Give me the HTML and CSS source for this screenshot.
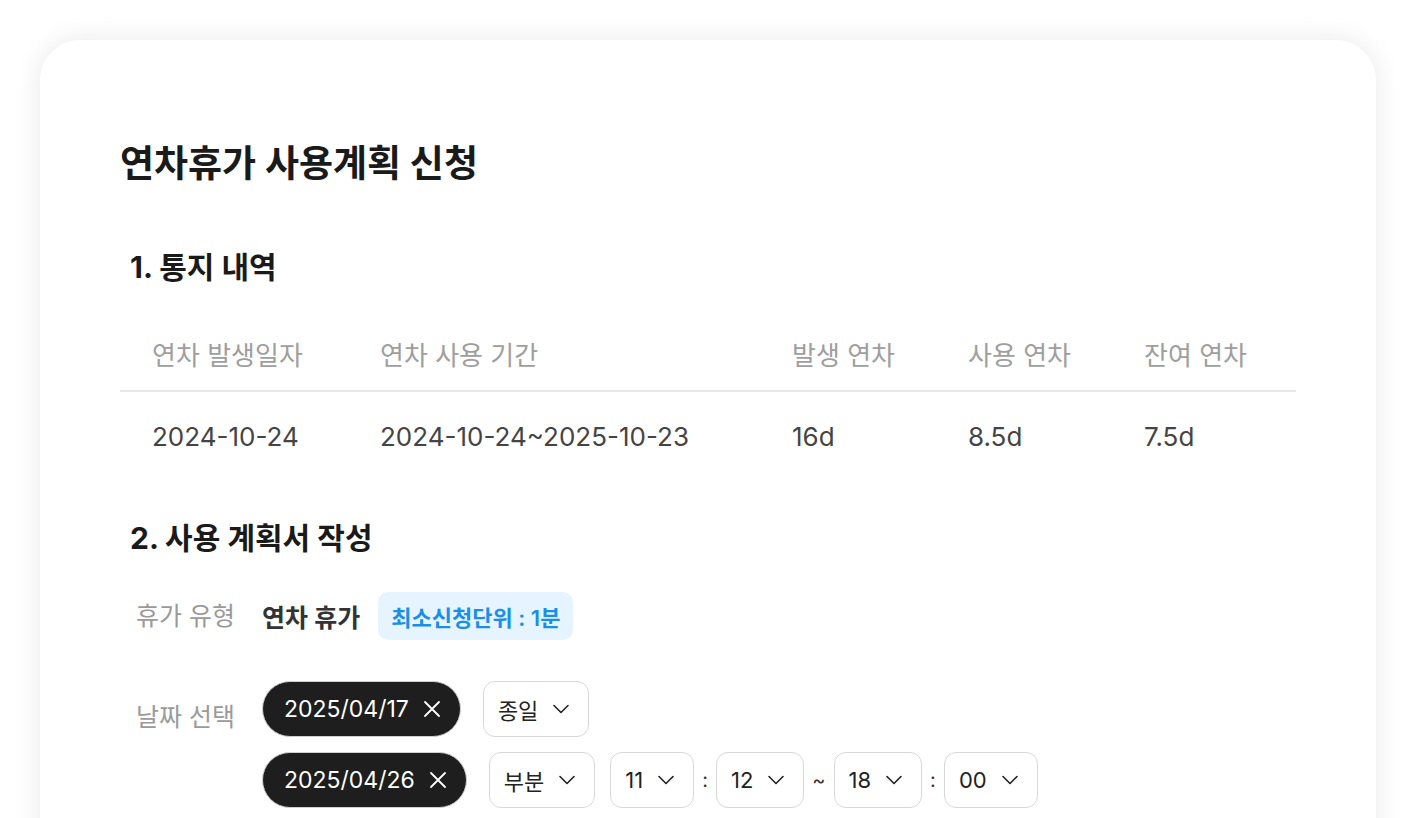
FILE: index.html
```html
<!DOCTYPE html>
<html lang="ko">
<head>
  <meta charset="UTF-8" />
  <meta name="viewport" content="width=device-width, initial-scale=1.0"/>
  <title>연차휴가 사용계획 신청</title>
  <link rel="stylesheet" href="styles.css">
</head>
<body>
  <div class="card">
    <h1 class="title">연차휴가 사용계획 신청</h1>

    <h2 class="section">1. 통지 내역</h2>
    <div class="table">
      <div class="th">연차 발생일자</div>
      <div class="th">연차 사용 기간</div>
      <div class="th">발생 연차</div>
      <div class="th">사용 연차</div>
      <div class="th">잔여 연차</div>
      <div class="td">2024-10-24</div>
      <div class="td">2024-10-24~2025-10-23</div>
      <div class="td">16d</div>
      <div class="td">8.5d</div>
      <div class="td">7.5d</div>
    </div>

    <h2 class="section">2. 사용 계획서 작성</h2>
    <div class="field">
      <span class="label">휴가 유형</span>
      <div class="field-body type-row">
        <span class="value">연차 휴가</span>
        <span class="badge">최소신청단위 : 1분</span>
      </div>
    </div>

    <div class="field dates">
      <span class="label">날짜 선택</span>
      <div class="field-body date-list">
        <div class="date-row">
          <span class="chip">2025/04/17
            <svg width="18" height="18" viewBox="0 0 18 18"><path d="M2 2 L16 16 M16 2 L2 16" stroke="#fff" stroke-width="1.8" stroke-linecap="round"/></svg>
          </span>
          <span class="select">종일
            <svg width="16" height="10" viewBox="0 0 16 10"><path d="M1 1.5 L8 8.5 L15 1.5" fill="none" stroke="#222" stroke-width="1.6" stroke-linecap="round" stroke-linejoin="round"/></svg>
          </span>
        </div>
        <div class="date-row">
          <span class="chip">2025/04/26
            <svg width="18" height="18" viewBox="0 0 18 18"><path d="M2 2 L16 16 M16 2 L2 16" stroke="#fff" stroke-width="1.8" stroke-linecap="round"/></svg>
          </span>
          <span class="select">부분
            <svg width="16" height="10" viewBox="0 0 16 10"><path d="M1 1.5 L8 8.5 L15 1.5" fill="none" stroke="#222" stroke-width="1.6" stroke-linecap="round" stroke-linejoin="round"/></svg>
          </span>
          <div class="time">
            <span class="select">11
              <svg width="16" height="10" viewBox="0 0 16 10"><path d="M1 1.5 L8 8.5 L15 1.5" fill="none" stroke="#222" stroke-width="1.6" stroke-linecap="round" stroke-linejoin="round"/></svg>
            </span>
            <span class="sep">:</span>
            <span class="select">12
              <svg width="16" height="10" viewBox="0 0 16 10"><path d="M1 1.5 L8 8.5 L15 1.5" fill="none" stroke="#222" stroke-width="1.6" stroke-linecap="round" stroke-linejoin="round"/></svg>
            </span>
            <span class="sep">~</span>
            <span class="select">18
              <svg width="16" height="10" viewBox="0 0 16 10"><path d="M1 1.5 L8 8.5 L15 1.5" fill="none" stroke="#222" stroke-width="1.6" stroke-linecap="round" stroke-linejoin="round"/></svg>
            </span>
            <span class="sep">:</span>
            <span class="select">00
              <svg width="16" height="10" viewBox="0 0 16 10"><path d="M1 1.5 L8 8.5 L15 1.5" fill="none" stroke="#222" stroke-width="1.6" stroke-linecap="round" stroke-linejoin="round"/></svg>
            </span>
          </div>
        </div>
      </div>
    </div>
  </div>
</body>
</html>
```

FILE: styles.css
```css
body {
  margin: 0;
  padding: 40px;
  background: #fff;
  font-family: "Inter", "Noto Sans CJK KR", sans-serif;
  color: #1a1a1a;
}
.card {
  background: #fff;
  border-radius: 40px;
  box-shadow: 0 0 28px rgba(0, 0, 0, 0.09);
  padding: 100px 80px 120px;
}
.title {
  margin: 0;
  font-size: 37px;
  line-height: 48px;
  font-weight: 700;
}
.section {
  margin: 59px 0 0;
  padding-left: 10px;
  font-size: 30px;
  line-height: 40px;
  font-weight: 700;
}
.table {
  margin-top: 35px;
  display: grid;
  grid-template-columns: 228px 412px 176px 176px 1fr;
}
.th, .td {
  padding-left: 32px;
  font-size: 26px;
  line-height: 28px;
}
.th {
  padding-top: 20px;
  padding-bottom: 20px;
  color: #9e9e9e;
  border-bottom: 2px solid #e8e8e8;
}
.td {
  padding-top: 31px;
  padding-bottom: 35px;
  color: #444;
}
.table + .section {
  margin-top: 32px;
}
.field {
  display: flex;
  padding-left: 16px;
  margin-top: 34px;
}
.label {
  width: 126px;
  flex-shrink: 0;
  font-size: 25px;
  line-height: 48px;
  color: #9a9a9a;
}
.type-row {
  display: flex;
  align-items: center;
  gap: 18px;
}
.value {
  font-size: 25px;
  font-weight: 600;
  color: #333;
}
.badge {
  height: 48px;
  display: flex;
  align-items: center;
  padding: 0 13px;
  border-radius: 10px;
  background: #e6f4ff;
  color: #1a8fea;
  font-size: 22px;
  font-weight: 600;
}
.dates {
  margin-top: 41px;
}
.dates .label {
  margin-top: 12px;
}
.date-list {
  display: flex;
  flex-direction: column;
  gap: 15px;
}
.date-row {
  display: flex;
  align-items: center;
  gap: 22px;
}
.chip {
  height: 54px;
  display: flex;
  align-items: center;
  gap: 14px;
  padding: 0 19px 0 21px;
  border-radius: 28px;
  background: #1e1e1e;
  border: 1px solid #cfcfcf;
  color: #fff;
  font-size: 23px;
}
.select {
  height: 54px;
  display: flex;
  align-items: center;
  gap: 15px;
  padding: 0 19px 0 14px;
  border: 1.5px solid #d8d8d8;
  border-radius: 12px;
  font-size: 22px;
  color: #222;
}
.time {
  display: flex;
  align-items: center;
  gap: 8px;
  margin-left: -7px;
}
.sep {
  font-size: 20px;
  color: #333;
}
```
